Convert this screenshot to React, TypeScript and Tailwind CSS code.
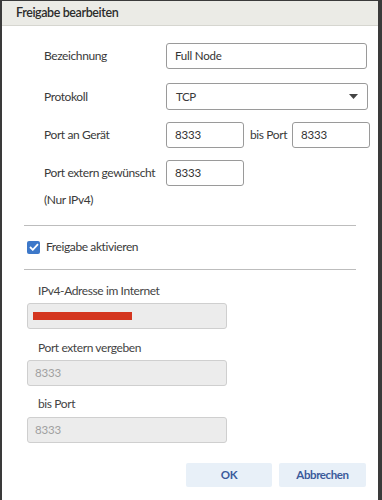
const font = { fontFamily: 'Lato, "Noto Sans", sans-serif' }

function Field({ value, className = '' }: { value: string; className?: string }) {
  return (
    <div className={`flex h-[26px] shrink-0 items-center rounded-[3px] border border-[#9a9a9a] bg-white px-2 text-[11.5px] tracking-[-0.2px] text-[#333] ${className}`}>
      {value}
    </div>
  )
}

function ReadOnly({ children }: { children: React.ReactNode }) {
  return (
    <div className="flex h-[26px] w-[200px] items-center rounded-[3px] border border-[#cfcfcf] bg-[#ececec] px-[7px] text-[11.5px] tracking-[-0.2px] text-[#a0a0a0]">
      {children}
    </div>
  )
}

export default function App() {
  return (
    <div className="h-[500px] w-[382px] overflow-hidden bg-[#3a3a3a] pl-[2px] pr-[4px] pt-[1px] text-[12px] leading-[18px] tracking-[-0.4px]" style={font}>
      <div className="flex h-[499px] flex-col bg-white">
        <div className="flex h-[25px] shrink-0 items-center border-b border-[#d6d6d0] bg-[#ebebe6] pl-[14px] text-[12.5px] font-semibold text-[#2b2b2b]">
          Freigabe bearbeiten
        </div>

        <div className="mt-[17px] flex items-center whitespace-nowrap pl-[42px] text-[#3a3a3a]">
          <span className="w-[122px] shrink-0">Bezeichnung</span>
          <Field value="Full Node" className="w-[201px]" />
        </div>

        <div className="mt-[14px] flex items-center whitespace-nowrap pl-[42px] text-[#3a3a3a]">
          <span className="w-[122px] shrink-0">Protokoll</span>
          <div className="flex h-[27px] w-[202px] shrink-0 items-center justify-between rounded-[3px] border border-[#9a9a9a] bg-white pl-[9px] pr-[9px] text-[11.5px]">
            TCP
            <svg width="9" height="5" viewBox="0 0 9 5"><path d="M0 0h9L4.5 5z" fill="#444" /></svg>
          </div>
        </div>

        <div className="mt-[12px] flex items-center whitespace-nowrap pl-[42px] text-[#3a3a3a]">
          <span className="w-[122px] shrink-0">Port an Gerät</span>
          <Field value="8333" className="w-[78px]" />
          <span className="ml-[6px] w-[42px] shrink-0">bis Port</span>
          <Field value="8333" className="w-[78px]" />
        </div>

        <div className="mt-[12px] flex items-center whitespace-nowrap pl-[42px] text-[#3a3a3a]">
          <span className="w-[122px] shrink-0">Port extern gewünscht</span>
          <Field value="8333" className="w-[78px]" />
        </div>

        <div className="mt-[5px] pl-[42px] text-[#3a3a3a]">(Nur IPv4)</div>

        <div className="mx-[22px] mt-[16px] border-t border-[#bdbdbd]" />

        <label className="mt-[12px] flex items-center gap-[6px] pl-[25px] text-[#3a3a3a]">
          <span className="flex h-[13px] w-[13px] items-center justify-center rounded-[2px] bg-[#3d78c9]">
            <svg width="10" height="8" viewBox="0 0 10 8"><path d="M1 4l2.8 2.8L9 1.2" stroke="#fff" strokeWidth="1.8" fill="none" /></svg>
          </span>
          Freigabe aktivieren
        </label>

        <div className="mx-[22px] mt-[13px] border-t border-[#bdbdbd]" />

        <div className="mt-[12px] pl-[36px] text-[#444]">IPv4-Adresse im Internet</div>
        <div className="mt-[3px] pl-[25px]">
          <ReadOnly>
            <span className="ml-[-2px] h-[8px] w-[99px] bg-[#d4361f]" />
          </ReadOnly>
        </div>

        <div className="mt-[10px] pl-[36px] text-[#444]">Port extern vergeben</div>
        <div className="mt-[3px] pl-[25px]">
          <ReadOnly>8333</ReadOnly>
        </div>

        <div className="mt-[9px] pl-[36px] text-[#444]">bis Port</div>
        <div className="mt-[4px] pl-[25px]">
          <ReadOnly>8333</ReadOnly>
        </div>

        <div className="mt-[20px] flex justify-end gap-[7px] pr-[12px]">
          <button className="h-[24px] w-[86px] rounded-[2px] bg-[#e8f0f8] text-[11.5px] font-bold text-[#3b5b9b]">OK</button>
          <button className="h-[24px] w-[87px] rounded-[2px] bg-[#e8f0f8] text-[11.5px] font-bold text-[#3b5b9b]">Abbrechen</button>
        </div>
      </div>
    </div>
  )
}
